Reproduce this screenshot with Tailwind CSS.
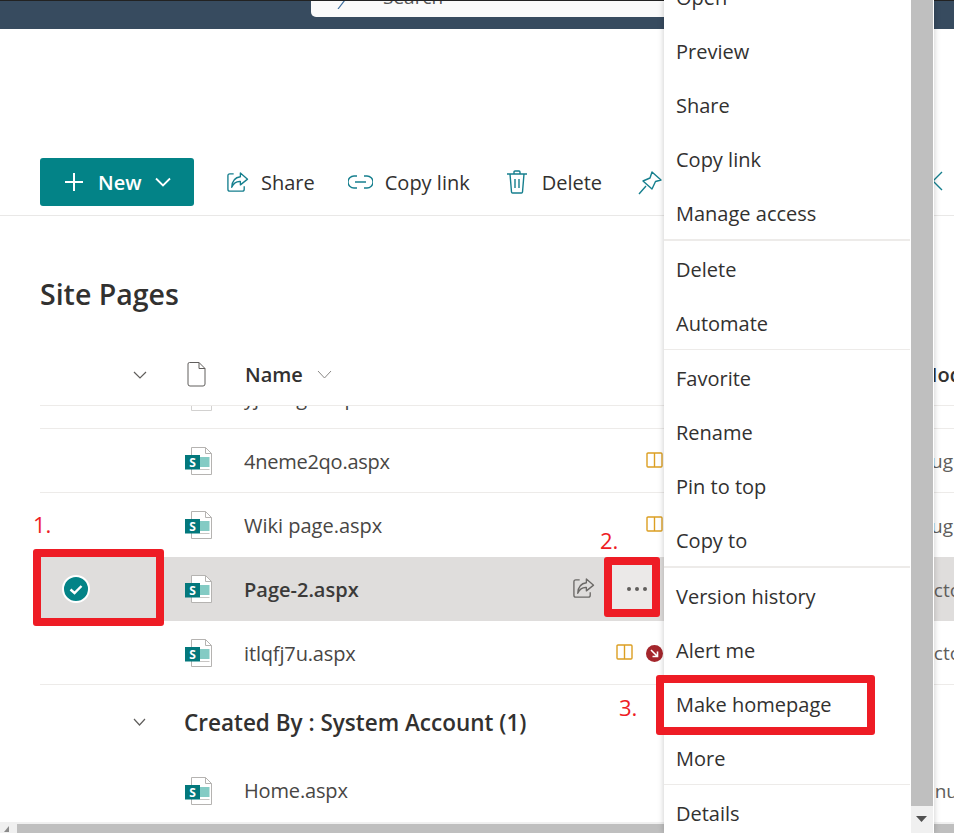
<!DOCTYPE html>
<html lang="en">
<head>
    <meta charset="UTF-8">
    <title>Site Pages</title>
    <script src="https://cdn.jsdelivr.net/npm/@tailwindcss/browser@4"></script>
</head>
<body class="bg-white">
    <!-- shared icons -->
    <svg class="hidden">
        <symbol id="spfile" viewBox="0 0 28 28">
            <path d="M6.5 0.5H20.5L26.5 6.5V27.5H6.5Z" fill="#fff" stroke="#b5b3b1"/>
            <path d="M20.5 0.5V6.5H26.5" fill="none" stroke="#b5b3b1"/>
            <rect x="15" y="10" width="9.5" height="10" fill="#84cbc4"/>
            <rect x="15" y="22" width="9.5" height="1" fill="#c8c6c4"/>
            <rect x="0" y="8" width="15" height="14.5" fill="#03787c"/>
            <text x="7.5" y="19.5" text-anchor="middle" font-family="Open Sans" font-weight="700" font-size="12" fill="#fff">S</text>
        </symbol>
        <symbol id="share" viewBox="0 0 24 24">
            <path d="M8 3H4Q2 3 2 5V19Q2 21 4 21H17Q19 21 19 19V16" fill="none" stroke="currentColor" stroke-width="1.4"/>
            <path d="M15 2L22.5 8.5L15 14.5V11Q9 10.5 6 17Q6.5 7 15 6Z" fill="none" stroke="currentColor" stroke-width="1.4" stroke-linejoin="round"/>
        </symbol>
        <symbol id="book" viewBox="0 0 17 16">
            <path d="M8.5 1H2Q1 1 1 2V14Q1 15 2 15H8.5ZM8.5 1H15Q16 1 16 2V14Q16 15 15 15H8.5Z" fill="none" stroke="#dc9f22" stroke-width="1.4"/>
        </symbol>
    </svg>

    <div class="relative w-[954px] h-[833px] overflow-hidden font-['Open_Sans',sans-serif] text-[#323130]">
        <!-- suite bar -->
        <header class="h-[29px] bg-[#374b5f] border-t border-[#222222] overflow-hidden">
            <div class="ml-[311px] w-[353px] h-[16px] bg-[#fafafa] rounded-bl-[5px] flex items-end overflow-hidden pl-[26px] gap-[32px]">
                <svg class="w-[14px] h-[14px] mb-[8px] shrink-0" viewBox="0 0 14 14"><path d="M1 14L11 1" stroke="#3f6f9f" stroke-width="1.2"/></svg>
                <span class="text-[19px] leading-[24px] mb-[8px] text-[#555555]">Search</span>
            </div>
        </header>

        <!-- command bar -->
        <div class="mt-[129px] h-[58px] pb-[9px] pl-[40px] border-b border-[#e9e8e7] flex items-center text-[20px] text-[#323130]">
            <button class="w-[154px] h-[48px] rounded-[3px] bg-[#038387] text-white font-semibold flex items-center pl-[24px]">
                <svg class="w-[20px] h-[20px] shrink-0" viewBox="0 0 20 20"><path d="M10 1V19M1 10H19" stroke="#fff" stroke-width="2"/></svg>
                <span class="ml-[14px] mt-[2px]">New</span>
                <svg class="w-[16px] h-[10px] ml-[13px]" viewBox="0 0 16 10"><path d="M1 1.5L8 8.5L15 1.5" fill="none" stroke="#fff" stroke-width="1.8"/></svg>
            </button>
            <svg class="ml-[32px] w-[23px] h-[23px] text-[#167f8e] shrink-0"><use href="#share"/></svg>
            <span class="ml-[12px] mt-[2px]">Share</span>
            <svg class="ml-[33px] w-[25px] h-[14px] shrink-0" viewBox="0 0 25 14"><path d="M9 1H6A6 6 0 0 0 6 13H9M16 1H19A6 6 0 0 1 19 13H16M7 7H18" fill="none" stroke="#167f8e" stroke-width="1.4"/></svg>
            <span class="ml-[12px] mt-[2px]">Copy link</span>
            <svg class="ml-[36px] w-[22px] h-[24px] shrink-0" viewBox="0 0 22 24"><path d="M1 4H21M4 4L5.5 22Q5.6 23 6.5 23H15.5Q16.4 23 16.5 22L18 4M8 4V2Q8 1 9 1H13Q14 1 14 2V4M9 9V18M13 9V18" fill="none" stroke="#167f8e" stroke-width="1.4"/></svg>
            <span class="ml-[14px] mt-[2px]">Delete</span>
            <svg class="ml-[36px] w-[25px] h-[25px] shrink-0" viewBox="0 0 25 25"><path d="M1 24L8 16M14 2L23 10L17.5 11.5L14 19L5 11L12 8Z" fill="none" stroke="#167f8e" stroke-width="1.4" stroke-linejoin="round"/></svg>
        </div>
        <svg class="absolute left-[932px] top-[171px] w-[11px] h-[20px]" viewBox="0 0 11 20"><path d="M10 1L1 10L10 19" fill="none" stroke="#167f8e" stroke-width="1.4"/></svg>

        <h1 class="ml-[40px] mt-[56px] h-[44px] text-[28.5px] leading-[44px] font-semibold">Site Pages</h1>

        <!-- list -->
        <section class="mt-[29px] ml-[40px] text-[20px]">
            <div class="h-[61px] flex items-center border-b border-[#edebe9] font-semibold">
                <div class="w-[147px] shrink-0 pl-[93px]">
                    <svg class="w-[14px] h-[8px]" viewBox="0 0 14 8"><path d="M1 1L7 7L13 1" fill="none" stroke="#605e5c" stroke-width="1.2"/></svg>
                </div>
                <svg class="w-[19px] h-[25px] shrink-0 -mt-[2px]" viewBox="0 0 19 25"><path d="M2.5 0.5H12L18 6.5V22Q18 24 16 24H3Q1 24 1 22V2Q1 0.5 2.5 0.5ZM12 0.5V6.5H18" fill="none" stroke="#605e5c" stroke-width="1"/></svg>
                <span class="ml-[39px]">Name</span>
                <svg class="ml-[14px] w-[15px] h-[9px] -mt-[2px]" viewBox="0 0 15 9"><path d="M1 1L7.5 8L14 1" fill="none" stroke="#8a8886" stroke-width="1"/></svg>
                <span class="absolute left-[919px]">Modified</span>
            </div>

            <div class="h-[23px] overflow-hidden border-b border-[#edebe9]">
                <div class="-mt-[41px] h-[64px] flex items-center text-[#484644]">
                    <svg class="ml-[145px] w-[28px] h-[28px] shrink-0 opacity-60"><use href="#spfile"/></svg>
                    <span class="ml-[31px] mt-[2px]">yjrxmg3.aspx</span>
                </div>
            </div>

            <div class="relative h-[64px] flex items-center border-b border-[#edebe9] text-[#484644]">
                <svg class="ml-[145px] w-[28px] h-[28px] shrink-0"><use href="#spfile"/></svg>
                <span class="ml-[31px] mt-[2px] tracking-[-0.25px]">4neme2qo.aspx</span>
                <svg class="absolute left-[606px] top-[23px] w-[17px] h-[16px]"><use href="#book"/></svg>
                <span class="absolute left-[879px] mt-[2px] text-[19px] text-[#605e5c]">August</span>
            </div>

            <div class="relative h-[64px] flex items-center text-[#484644]">
                <svg class="ml-[145px] w-[28px] h-[28px] shrink-0"><use href="#spfile"/></svg>
                <span class="ml-[31px] mt-[2px]">Wiki page.aspx</span>
                <svg class="absolute left-[606px] top-[23px] w-[17px] h-[16px]"><use href="#book"/></svg>
                <span class="absolute left-[879px] mt-[2px] text-[19px] text-[#605e5c]">August</span>
            </div>

            <div class="relative h-[64px] flex items-center bg-[#dfdddc] font-semibold text-[#3b3a39] -mr-[1px]">
                <span class="absolute left-[22px] top-[18px] w-[28px] h-[28px] rounded-full bg-[#038387] border-2 border-white flex items-center justify-center">
                    <svg class="w-[14px] h-[11px]" viewBox="0 0 14 11"><path d="M1.5 5.5L5.5 9L12.5 2" fill="none" stroke="#fff" stroke-width="2.4"/></svg>
                </span>
                <svg class="ml-[145px] w-[28px] h-[28px] shrink-0"><use href="#spfile"/></svg>
                <span class="ml-[31px] mt-[2px]">Page-2.aspx</span>
                <svg class="absolute left-[532px] top-[20px] w-[23px] h-[23px] text-[#6b6967]"><use href="#share"/></svg>
                <span class="absolute left-[572px] top-[8px] w-[40px] h-[48px] pr-[5px] bg-[#ebe9e8] flex items-center justify-end gap-[4px]">
                    <i class="block w-[4px] h-[4px] rounded-full bg-[#605e5c]"></i><i class="block w-[4px] h-[4px] rounded-full bg-[#605e5c]"></i><i class="block w-[4px] h-[4px] rounded-full bg-[#605e5c]"></i>
                </span>
                <span class="absolute left-[879px] mt-[2px] text-[19px] font-normal text-[#605e5c]">October</span>
            </div>

            <div class="relative h-[64px] flex items-center border-b border-[#edebe9] text-[#484644]">
                <svg class="ml-[145px] w-[28px] h-[28px] shrink-0"><use href="#spfile"/></svg>
                <span class="ml-[31px] mt-[2px] tracking-[-0.15px]">itlqfj7u.aspx</span>
                <svg class="absolute left-[576px] top-[23px] w-[17px] h-[16px]"><use href="#book"/></svg>
                <svg class="absolute left-[606px] top-[24px] w-[17px] h-[17px]" viewBox="0 0 17 17"><circle cx="8.5" cy="8.5" r="8.5" fill="#a4262c"/><path d="M5 5L11 11M11.5 6.5V11.5H6.5" fill="none" stroke="#fff" stroke-width="1.6"/></svg>
                <span class="absolute left-[879px] mt-[2px] text-[19px] text-[#605e5c]">October</span>
            </div>

            <div class="h-[76px] flex items-center font-semibold text-[#323130]">
                <svg class="ml-[93px] w-[13px] h-[8px] shrink-0 -mt-[2px]" viewBox="0 0 13 8"><path d="M1 1L6.5 7L12 1" fill="none" stroke="#605e5c" stroke-width="1.2"/></svg>
                <span class="ml-[38px] -mt-[1px] text-[22.5px]">Created By : System Account (1)</span>
            </div>

            <div class="relative h-[60px] flex items-center text-[#484644]">
                <svg class="ml-[145px] w-[28px] h-[28px] shrink-0"><use href="#spfile"/></svg>
                <span class="ml-[31px] tracking-[-0.15px]">Home.aspx</span>
                <span class="absolute left-[879px] text-[19px] text-[#605e5c]">January</span>
            </div>
        </section>

        <!-- page scrollbar -->
        <div class="absolute left-0 bottom-0 w-full h-[11px] flex bg-[#f0f0f0]">
            <div class="w-[17px] h-full flex items-end pl-[4px] pb-[1px]">
                <svg class="w-[5px] h-[6px]" viewBox="0 0 5 6"><path d="M5 0V6H0Z" fill="#8a8a8a"/></svg>
            </div>
            <div class="flex-1 mt-[2px] bg-[#bfbfbf]"></div>
        </div>

        <!-- context menu -->
        <div class="absolute left-[664px] top-0 w-[270px] h-[833px] flex overflow-hidden bg-white shadow-[0_0_6px_rgba(0,0,0,0.22)] text-[20px] text-[#323130]">
            <div class="w-[246px] -mt-[29px] shrink-0">
                <div class="h-[54px] pl-[12px] flex items-center">Open</div>
                <div class="h-[54px] pl-[12px] flex items-center">Preview</div>
                <div class="h-[54px] pl-[12px] flex items-center">Share</div>
                <div class="h-[54px] pl-[12px] flex items-center">Copy link</div>
                <div class="h-[54px] pl-[12px] flex items-center">Manage access</div>
                <div class="h-[2px] -mt-[2px] mb-[2px] bg-[#edebe9]"></div>
                <div class="h-[54px] pl-[12px] flex items-center">Delete</div>
                <div class="h-[54px] pl-[12px] flex items-center">Automate</div>
                <div class="h-px -mt-[2px] mb-[2px] bg-[#edebe9]"></div>
                <div class="h-[54px] pl-[12px] flex items-center">Favorite</div>
                <div class="h-[54px] pl-[12px] flex items-center">Rename</div>
                <div class="h-[54px] pl-[12px] flex items-center">Pin to top</div>
                <div class="h-[54px] pl-[12px] flex items-center">Copy to</div>
                <div class="h-[2px] -mt-[2px] mb-[2px] bg-[#edebe9]"></div>
                <div class="h-[54px] pl-[12px] flex items-center">Version history</div>
                <div class="h-[54px] pl-[12px] flex items-center">Alert me</div>
                <div class="h-[54px] pl-[12px] flex items-center">Make homepage</div>
                <div class="h-[54px] pl-[12px] flex items-center">More</div>
                <div class="h-px -mt-[2px] mb-[2px] bg-[#edebe9]"></div>
                <div class="h-[54px] pl-[12px] flex items-center">Details</div>
            </div>
            <div class="ml-px w-[22px] bg-[#f0f0f0] flex flex-col">
                <div class="h-[806px] bg-[#bfbfbf]"></div>
                <svg class="mt-[10px] ml-[5px] w-[11px] h-[6px]" viewBox="0 0 11 6"><path d="M0 0H11L5.5 6Z" fill="#505050"/></svg>
            </div>
        </div>

        <!-- annotations -->
        <div class="absolute left-[33px] top-[549px] w-[131px] h-[77px] border-[8px] border-[#ee1c25] rounded-[3px]"></div>
        <div class="absolute left-[604px] top-[557px] w-[56px] h-[60px] border-[8px] border-[#ee1c25] rounded-[3px]"></div>
        <div class="absolute left-[656px] top-[675px] w-[219px] h-[60px] border-[8px] border-[#ee1c25] rounded-[3px]"></div>
        <span class="absolute left-[33px] top-[508px] text-[22px] leading-[32px] text-[#ee1c25]">1.</span>
        <span class="absolute left-[600px] top-[524px] text-[22px] leading-[32px] text-[#ee1c25]">2.</span>
        <span class="absolute left-[619px] top-[691px] text-[22px] leading-[32px] text-[#ee1c25]">3.</span>
    </div>
</body>
</html>
